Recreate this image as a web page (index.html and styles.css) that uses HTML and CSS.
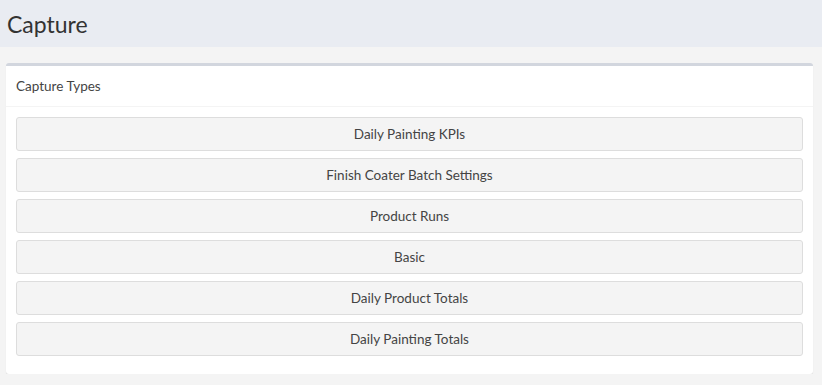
FILE: index.html
```html
<!DOCTYPE html>
<html lang="en">
<head>
    <meta charset="UTF-8">
    <meta name="viewport" content="width=device-width, initial-scale=1.0">
    <title>Capture</title>
    <link rel="stylesheet" href="styles.css">
</head>
<body>
    <header class="content-header">
        <h1>Capture</h1>
    </header>

    <section class="content">
        <div class="box">
            <div class="box-header">
                <h3 class="box-title">Capture Types</h3>
            </div>
            <div class="box-body">
                <button class="btn-capture">Daily Painting KPIs</button>
                <button class="btn-capture">Finish Coater Batch Settings</button>
                <button class="btn-capture">Product Runs</button>
                <button class="btn-capture">Basic</button>
                <button class="btn-capture">Daily Product Totals</button>
                <button class="btn-capture">Daily Painting Totals</button>
            </div>
        </div>
    </section>
</body>
</html>
```

FILE: styles.css
```css
/* Page */
body {
    margin: 0;
    padding: 0;
    background: #f4f4f4;
    color: #333333;
    font-family: Lato, "Open Sans", sans-serif;
    font-size: 13.5px;
}

/* Header band */
.content-header {
    height: 47px;
    background: #e9ecf2;
    padding: 0 7px;
    display: flex;
    align-items: center;
}

.content-header h1 {
    margin: 0;
    font-size: 23px;
    font-weight: 400;
    color: #333333;
}

.content {
    padding: 16px 9px 0 6px;
}

/* Box */
.box {
    background: #ffffff;
    border-top: 3px solid #d2d6de;
    border-radius: 3px;
    box-shadow: 0 1px 1px rgba(0, 0, 0, 0.1);
}

.box-header {
    height: 40px;
    padding: 0 10px;
    display: flex;
    align-items: center;
    border-bottom: 1px solid #f4f4f4;
}

.box-title {
    margin: 0;
    font-size: 13.5px;
    font-weight: 400;
    color: #444444;
}

.box-body {
    padding: 10px 10px 11px 10px;
    display: flex;
    flex-direction: column;
    gap: 7px;
}

.btn-capture {
    height: 34px;
    background: #f4f4f4;
    border: 1px solid #dddddd;
    border-radius: 3px;
    color: #444444;
    font-family: inherit;
    font-size: 13.5px;
    cursor: pointer;
}

.box-body .btn-capture:last-child {
    margin-bottom: 7px;
}
```
